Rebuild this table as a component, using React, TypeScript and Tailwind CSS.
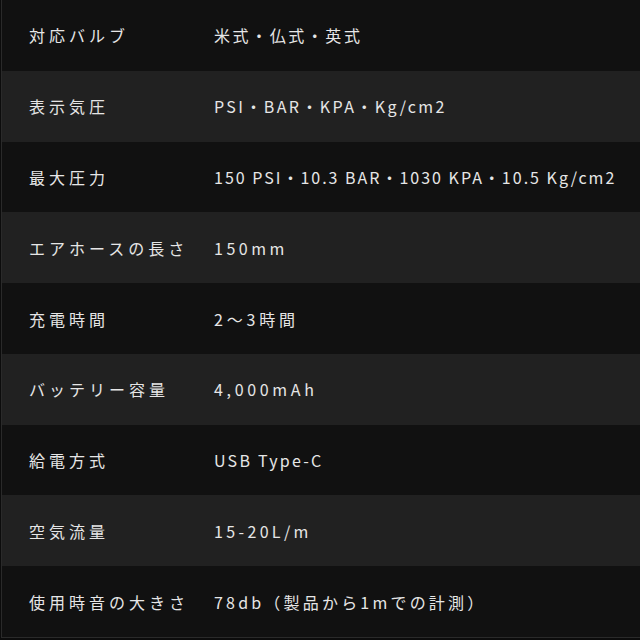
const specs: [string, string, string][] = [
  ['対応バルブ', '米式・仏式・英式', 'tracking-[0.16em]'],
  ['表示気圧', 'PSI・BAR・KPA・Kg/cm2', 'tracking-[0.15em]'],
  ['最大圧力', '150 PSI・10.3 BAR・1030 KPA・10.5 Kg/cm2', 'tracking-[0.125em]'],
  ['エアホースの長さ', '150mm', 'tracking-[0.22em]'],
  ['充電時間', '2〜3時間', 'tracking-[0.24em]'],
  ['バッテリー容量', '4,000mAh', 'tracking-[0.23em]'],
  ['給電方式', 'USB Type-C', 'tracking-[0.14em]'],
  ['空気流量', '15-20L/m', 'tracking-[0.21em]'],
  ['使用時音の大きさ', '78db（製品から1mでの計測）', 'tracking-[0.2em]'],
]

export default function App() {
  return (
    <div
      className="w-[640px] h-[640px] bg-[#0c0c0c] overflow-hidden pl-[1px]"
      style={{ fontFamily: '"Noto Sans CJK JP", "Noto Sans", sans-serif' }}
    >
      <div className="border-l border-[#2a2a2a] border-b h-[638px] flex flex-col">
        {specs.map(([label, value, track], i) => (
          <div
            key={label}
            className={`flex items-center flex-1 ${i % 2 === 0 ? 'bg-[#111111]' : 'bg-[#212121]'}`}
          >
            <div className="w-[212px] pl-[27px] text-[16px] tracking-[0.25em] text-[#e6e6e6]">{label}</div>
            <div className={`text-[16px] text-[#e6e6e6] whitespace-nowrap ${track}`}>{value}</div>
          </div>
        ))}
      </div>
    </div>
  )
}
